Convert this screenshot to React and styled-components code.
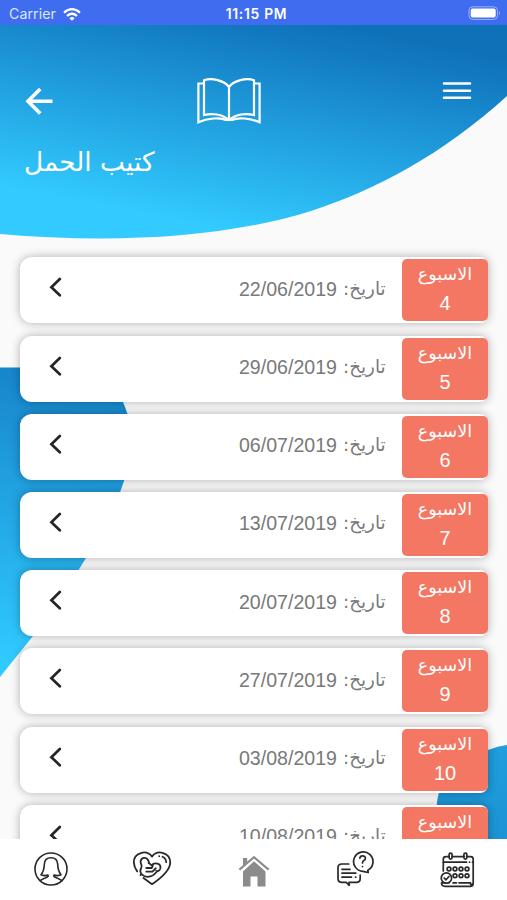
import React from "react";
import styled, { createGlobalStyle } from "styled-components";

const GlobalStyle = createGlobalStyle`
  * { box-sizing: border-box; }
  body { margin: 0; background: #fafafa; }
  svg { display: block; }
`;

const Screen = styled.div`
  position: relative;
  isolation: isolate;
  display: flex;
  flex-direction: column;
  width: 507px;
  height: 900px;
  overflow: hidden;
  background: #fafafa;
  font-family: "Liberation Sans", "DejaVu Sans", sans-serif;
`;

const Backdrop = styled.svg`
  position: absolute;
  inset: 0;
  z-index: -1;
`;

const StatusBar = styled.div`
  display: grid;
  grid-template-columns: 1fr auto 1fr;
  align-items: center;
  height: 25px;
  flex: none;
  padding: 3px 6px 0 9px;
  background: #406df0;
  color: #fff;
  font: 14.2px/20px Inter, sans-serif;
`;

const Carrier = styled.span`
  display: flex;
  align-items: center;
  gap: 7px;
  color: #dbe5ff;
  letter-spacing: 0.05px;
`;

const Clock = styled.span`
  font-size: 13.8px;
  font-weight: 600;
  letter-spacing: 0.72px;
  padding-left: 3px;
`;

const Battery = styled.svg`
  justify-self: end;
  margin-top: -2px;
`;

const Header = styled.header`
  flex: none;
  height: 232px;
  padding: 53px 35px 0 24px;
  color: #fff;
`;

const HeaderRow = styled.div`
  display: grid;
  grid-template-columns: 173px 1fr auto;
  align-items: start;
  height: 60px;
`;

const IconButton = styled.button`
  display: block;
  padding: 0;
  margin-top: ${(p) => p.$top}px;
  border: 0;
  background: none;
  color: inherit;
`;

const Title = styled.h1`
  width: max-content;
  margin: 6px 0 0;
  font: 400 26.4px/36px "DejaVu Sans", sans-serif;
`;

const List = styled.main`
  flex: 1;
  min-height: 0;
  overflow: hidden;
  display: flex;
  flex-direction: column;
  gap: 12.2px;
  margin-top: -12px;
  padding: 12.4px 19px 0 20px;
`;

const Card = styled.article`
  flex: none;
  display: flex;
  align-items: center;
  height: 66px;
  padding-left: 29px;
  border-radius: 12px 8px 8px 12px;
  background: #fff;
  box-shadow: 0 0 10px rgba(0, 0, 0, 0.3);
`;

const DateLine = styled.div`
  display: flex;
  align-items: center;
  justify-content: flex-end;
  gap: 6px;
  margin-left: auto;
  margin-right: 18px;
  padding-bottom: 3px;
  color: #797979;
  font-size: 19.6px;
  line-height: 24px;
`;

const DateLabel = styled.span`
  width: 41px;
  display: flex;
  justify-content: flex-end;
  white-space: nowrap;
  font-family: "DejaVu Sans", sans-serif;
  font-size: 18.3px;
`;

const Badge = styled.div`
  display: flex;
  flex-direction: column;
  align-items: center;
  width: 86px;
  height: 62px;
  padding-top: 2px;
  border-radius: 5px;
  background: #f37762;
  color: #fff;
`;

const BadgeLabel = styled.span`
  font: 17.5px/26px "DejaVu Sans", sans-serif;
`;

const BadgeNumber = styled.span`
  font-size: 20px;
  line-height: 32px;
`;

const TabBar = styled.nav`
  flex: none;
  display: grid;
  grid-template-columns: repeat(5, 1fr);
  justify-items: center;
  align-items: start;
  height: 61.5px;
  padding-top: 11px;
  background: #fff;
  color: #292929;
`;

const Tab = styled.a`
  padding-top: ${(p) => p.$drop || 0}px;
  padding-left: ${(p) => p.$shift || 0}px;
`;

const weeks = [
  [4, "22/06/2019"],
  [5, "29/06/2019"],
  [6, "06/07/2019"],
  [7, "13/07/2019"],
  [8, "20/07/2019"],
  [9, "27/07/2019"],
  [10, "03/08/2019"],
  [11, "10/08/2019"],
];

const line = {
  fill: "none",
  stroke: "currentColor",
  strokeLinecap: "round",
  strokeLinejoin: "round",
};

function Shapes() {
  return (
    <Backdrop width="507" height="900" viewBox="0 0 507 900">
      <defs>
        <linearGradient id="top" gradientUnits="userSpaceOnUse" x1="7" y1="-37" x2="-34" y2="179">
          <stop offset="0" stopColor="#0f72b9" />
          <stop offset="0.12" stopColor="#127ac1" />
          <stop offset="1" stopColor="#32caff" />
        </linearGradient>
        <linearGradient id="left" gradientUnits="userSpaceOnUse" x1="45" y1="365" x2="0" y2="660">
          <stop offset="0" stopColor="#1683c9" />
          <stop offset="1" stopColor="#30caff" />
        </linearGradient>
        <linearGradient id="right" gradientUnits="userSpaceOnUse" x1="507" y1="740" x2="480" y2="850">
          <stop offset="0" stopColor="#209edd" />
          <stop offset="1" stopColor="#1b92d3" />
        </linearGradient>
      </defs>
      <path d="M0 25H507V96C441 156 374 190 314 210C221 240 105 243 0 234Z" fill="url(#top)" />
      <path d="M0 367.5H60C98 368 114 382 123 402C135 430 133 454 124 481C113 514 100 537 86 558C70 584 53 609 33 636L0 677Z" fill="url(#left)" />
      <path d="M507 745Q498 746 488 750C462 757 435 780 437 810V850H507Z" fill="url(#right)" />
    </Backdrop>
  );
}

function WifiIcon() {
  return (
    <svg width="18" height="13" viewBox="0 0 18 13" fill="none" stroke="#fff" strokeWidth="2.2">
      <path d="M1 4.6Q9-2.3 17 4.6M4 7.9Q9 3.6 14 7.9" />
      <path d="M6.4 10.2Q9 8 11.6 10.2L9 12.7Z" fill="#fff" stroke="none" />
    </svg>
  );
}

function BatteryIcon() {
  return (
    <Battery width="33" height="14" viewBox="0 0 33 14">
      <rect x="1" y="0.8" width="28.5" height="12.6" rx="3.8" fill="none" stroke="#9bb2f8" />
      <rect x="2.7" y="2.6" width="25" height="9" rx="2" fill="#fff" />
      <path d="M31 5Q33 7 31 9.2Z" fill="#9bb2f8" />
    </Battery>
  );
}

function BookIcon() {
  return (
    <svg width="64" height="47" viewBox="0 0 64 47" {...line} strokeWidth="2.2" strokeLinejoin="miter">
      <path d="M32 9C27 2.5 15 -.5 7 2.2V37C15 35 25 36 32 42C39 36 49 35 57 37V2.2C49 -.5 37 2.5 32 9ZM32 9V41" />
      <path d="M6 5.5H1.4V44.3C10 40.5 23 38.8 29 42H35C41 38.8 54 40.5 62.6 44.3V5.5H58" />
    </svg>
  );
}

function WomanIcon() {
  return (
    <svg width="36" height="36" viewBox="0 0 36 36" {...line} strokeWidth="1.6">
      <circle cx="18" cy="18" r="16" />
      <path d="M7.2 29.6C10 27 14 26.8 15.2 25.2L15 24.1Q11.5 25.2 8 23.8C10.5 20.5 11.2 17.4 11.3 13.4C11.5 9 14 6.8 18 6.8C22 6.8 24.5 9 24.7 13.4C24.8 17.4 25.5 20.5 28 23.8Q24.5 25.2 21 24.1L20.8 25.2C22 26.8 26 27 28.8 29.6" />
    </svg>
  );
}

function HeartIcon() {
  return (
    <svg width="40" height="36" viewBox="0 0 40 36" {...line} strokeWidth="1.8">
      <path d="M11.5 28L20 34.2C29 28 38.2 20 38.2 12.4C38.2 2.5 25.5-.8 20 6.6C14.5-.8 1.8 2.5 1.8 12.4Q2 17 5.2 21.4" />
      <path d="M8.5 25L8.6 25.1M30.5 6.8Q34 8.4 34.2 12.2M27.2 6.2V6.3" />
      <path d="M16.8 13.2C17.2 6.3 8 6.3 8.6 12.4C8.9 14.8 10.6 15.5 9.2 18C6.3 23.3 11.8 27.4 17 26.7C20.6 26.2 22.6 24.4 24.4 22.2" />
      <path d="M16.8 12.8L19.6 15.4C22.4 11.9 29.3 13.5 28.4 18.2C27.8 20.6 25.8 21.6 24.2 20.8M14.3 18H19.8L20.8 15.8M14.3 21.6H20.5L23.8 18.2" />
    </svg>
  );
}

function HomeIcon() {
  return (
    <svg width="32" height="31" viewBox="0 0 32 31" fill="#8b8b8b">
      <path d="M5 2H9.2V6L5 10ZM5 15.6L16 5.3L27.5 15.6V30.5H19.5V20.5H12.5V30.5H5Z" />
      <path d="M1.4 13.6L16 1.2L30.6 13.6" fill="none" stroke="#8b8b8b" strokeWidth="2.1" />
    </svg>
  );
}

function ChatIcon() {
  return (
    <svg width="38" height="38" viewBox="0 0 38 38" {...line} strokeWidth="1.7">
      <path d="M12.8 14H5.8Q2 14 2 17.8V28.5Q2 32.4 5.8 32.4H10.2L13 35V32.4H20.4Q24.2 32.4 24.2 28.5V25.2" />
      <path d="M6 19.3H14M6 23.2H19.8M6 27.2H15.5M19.6 27.2H19.8M12.5 34.8H13.5" />
      <path d="M31.8 20.2A9.7 9.7 0 1 0 27 21.3L32.2 22.5Z" />
      <path d="M23.9 8.2Q24.1 5.8 26.5 5.8C30 5.8 30.2 9.4 27.8 10.5Q26.5 11.2 26.5 13M26.5 16.5V16.6" />
    </svg>
  );
}

function CalendarIcon() {
  return (
    <svg width="36" height="36" viewBox="0 0 36 36" {...line} strokeWidth="1.7">
      <path d="M3.3 19V7.2Q3.3 4.6 6 4.6H9.3M12 4.6H24M26.6 4.6H30.5Q33.2 4.6 33.2 7.2V31.4Q33.2 34.3 30.2 34.3H5Q1.4 34.3 1.5 30.8H9M13 30.8H16.5M19 30.8H30.5Q30.2 34.2 33 31.5" />
      <path d="M3.5 10.2H26.5M29.5 10.2H29.6M32.5 10.2H33" />
      <rect x="9.1" y="1.1" width="3" height="6" rx="1.5" />
      <rect x="23.9" y="1.1" width="3" height="6" rx="1.5" />
      {[9, 15, 21, 27].map((x) => <circle key={x} cx={x} cy="17" r="1.9" />)}
      {[15, 21, 27].map((x) => <circle key={x} cx={x} cy="23.8" r="1.9" />)}
      <circle cx="6.4" cy="26" r="5.2" fill="#fff" />
      <path d="M4.1 26L6 27.8L9 24.5" />
    </svg>
  );
}

function WeekCard({ number, date }) {
  return (
    <Card>
      <svg width="13" height="20" viewBox="0 0 13 20" fill="none" stroke="#252525" strokeWidth="2.7" strokeLinecap="round" transform="translate(0,-3)">
        <path d="M10.8 2L2.4 10.2L10.8 18.2" />
      </svg>
      <DateLine>
        <span>{date}</span>
        <DateLabel dir="rtl" lang="ar">تاريخ:</DateLabel>
      </DateLine>
      <Badge>
        <BadgeLabel dir="rtl" lang="ar">الاسبوع</BadgeLabel>
        <BadgeNumber>{number}</BadgeNumber>
      </Badge>
    </Card>
  );
}

export default function App() {
  return (
    <Screen>
      <GlobalStyle />
      <Shapes />
      <StatusBar>
        <Carrier>Carrier <WifiIcon /></Carrier>
        <Clock>11:15 PM</Clock>
        <BatteryIcon />
      </StatusBar>
      <Header>
        <HeaderRow>
          <IconButton $top={9} aria-label="Back">
            <svg width="30" height="28" viewBox="0 0 30 28" {...line} strokeWidth="3.6" strokeLinecap="butt" strokeLinejoin="miter">
              <path d="M28.5 14.2H4M16.2 2L4 14.2L16.2 26.4" />
            </svg>
          </IconButton>
          <BookIcon />
          <IconButton $top={3} aria-label="Menu">
            <svg width="30" height="20" viewBox="0 0 30 20" {...line} strokeWidth="2.5">
              <path d="M2 2.5H28M2 9.7H28M2 16.8H28" />
            </svg>
          </IconButton>
        </HeaderRow>
        <Title dir="rtl" lang="ar">كتيب الحمل</Title>
      </Header>
      <List>
        {weeks.map(([number, date]) => <WeekCard key={number} number={number} date={date} />)}
      </List>
      <TabBar>
        <Tab $drop={1}><WomanIcon /></Tab>
        <Tab><HeartIcon /></Tab>
        <Tab $drop={6} $shift={2}><HomeIcon /></Tab>
        <Tab><ChatIcon /></Tab>
        <Tab $drop={2} $shift={3}><CalendarIcon /></Tab>
      </TabBar>
    </Screen>
  );
}
